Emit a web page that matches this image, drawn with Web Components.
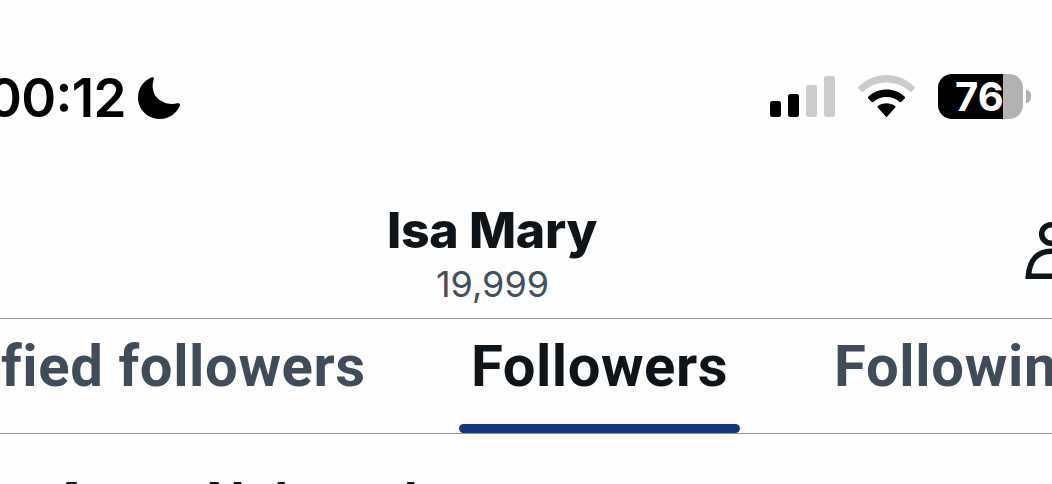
<!DOCTYPE html>
<html lang="en">
<head>
<meta charset="utf-8">
<title>Followers</title>
<style>
  body {
    margin: 0;
    height: 484px;
    overflow: hidden;
    background: #fefefe;
    color: #0f1419;
    font-family: Inter, "Liberation Sans", sans-serif;
  }
</style>
</head>
<body>
<followers-page></followers-page>
<script>
/**
 * Creates a template element from a string of markup.
 *
 * @param {string} html - The markup.
 * @returns {HTMLTemplateElement} The template.
 */
function createTemplate (html) {
  const template = document.createElement('template')
  template.innerHTML = html
  return template
}

const fitTemplate = createTemplate(`
  <style>
    :host {
      display: block;
      white-space: nowrap;
      flex: none;
    }
    span {
      display: inline-block;
    }
  </style>
  <span><slot></slot></span>
`)

customElements.define('fit-text',
  /**
   * A line of text whose tracking is adjusted to fill a given width.
   */
  class extends HTMLElement {
    constructor () {
      super()
      this.attachShadow({ mode: 'open' })
        .appendChild(fitTemplate.content.cloneNode(true))
    }

    connectedCallback () {
      const width = Number(this.getAttribute('width'))
      const span = this.shadowRoot.querySelector('span')
      const natural = span.getBoundingClientRect().width
      span.style.letterSpacing = `${(width - natural) / this.textContent.length}px`
      this.style.width = `${width}px`
    }
  })

const batteryTemplate = createTemplate(`
  <style>
    :host {
      display: flex;
      align-items: center;
      height: 45px;
      gap: 3px;
    }
    .body {
      box-sizing: border-box;
      width: 85px;
      height: 45px;
      padding-left: 17px;
      border-radius: 14px;
      background: linear-gradient(90deg, #000 65px, #b2b2b2 65px);
      color: #fff;
      font-size: 40px;
      font-weight: 700;
      line-height: 46px;
    }
    .nub {
      width: 5px;
      height: 13px;
      border-radius: 0 5px 5px 0;
      background: #b2b2b2;
    }
  </style>
  <div class="body"><fit-text width="49">76</fit-text></div>
  <div class="nub"></div>
`)

customElements.define('battery-level',
  /**
   * Battery with the charge written inside.
   */
  class extends HTMLElement {
    constructor () {
      super()
      this.attachShadow({ mode: 'open' })
        .appendChild(batteryTemplate.content.cloneNode(true))
    }
  })

const statusTemplate = createTemplate(`
  <style>
    :host {
      box-sizing: border-box;
      display: flex;
      justify-content: space-between;
      height: 194px;
      padding: 74px 21px 0 0;
      color: #000;
    }
    .left, .right {
      display: flex;
      align-items: flex-start;
    }
    .left {
      margin-left: -13px;
    }
    .time {
      font-size: 53px;
      font-weight: 600;
      font-feature-settings: "case";
      line-height: 48px;
    }
    .moon {
      margin: 2px 0 0 12px;
    }
    .wifi {
      margin: 0 22px;
    }
    svg {
      display: block;
    }
  </style>
  <div class="left">
    <fit-text class="time" width="139">00:12</fit-text>
    <svg class="moon" width="43" height="43" viewBox="0 0 43 43">
      <path d="M13.2 1.5C15 .6 16.4 1.500 15.700 3.200C13.800 9 14.400 16.500 18.700 21.300C23.200 26.400 31.200 29.500 39.200 27.300C41.500 26.700 42.800 28 42 29.500C38.500 37.300 31.300 43 21.800 43C9.800 43 0 33.800 0 21.500C0 12.400 5.500 4.800 13.200 1.500Z"/>
    </svg>
  </div>
  <div class="right">
    <svg width="66" height="45" viewBox="0 0 66 45">
      <rect x="0" y="27" width="11" height="16" rx="2.500"/>
      <rect x="18" y="20" width="11" height="23" rx="2.500"/>
      <rect x="36" y="11" width="11" height="32" rx="2.500" fill="#ccc"/>
      <rect x="54" y="2" width="11" height="41" rx="2.500" fill="#ccc"/>
    </svg>
    <svg class="wifi" width="58" height="45" viewBox="0 0 58 45">
      <path fill="#ccc" d="M.3 12.900C15.800-3 41.200-3 56.700 12.900Q57.500 13.700 56.700 14.500L53.500 17.800Q52.700 18.600 51.900 17.800C39.200 5.500 17.800 5.500 5.100 17.800Q4.300 18.600 3.500 17.800L.3 14.500Q-.5 13.700 .3 12.900Z"/>
      <path d="M10.300 22.800C20.300 13.100 36.700 13.100 46.700 22.800Q47.500 23.600 46.700 24.400L43.200 27.900Q42.400 28.600 41.600 27.900C34.700 21.500 22.300 21.500 15.400 27.900Q14.600 28.600 13.800 27.900L10.300 24.400Q9.500 23.600 10.300 22.800Z"/>
      <path d="M19.800 32C25 28.200 32 28.200 37.200 32Q38 32.800 37.200 33.600L29.300 42.500Q28.500 43.300 27.700 42.500L19.800 33.600Q19 32.800 19.800 32Z"/>
    </svg>
    <battery-level></battery-level>
  </div>
`)

customElements.define('status-bar',
  /**
   * Clock, signal, wifi and battery of the phone.
   */
  class extends HTMLElement {
    constructor () {
      super()
      this.attachShadow({ mode: 'open' })
        .appendChild(statusTemplate.content.cloneNode(true))
    }
  })

const headerTemplate = createTemplate(`
  <style>
    :host {
      box-sizing: border-box;
      display: grid;
      grid-template-columns: 387px 1fr 28px;
      height: 125px;
      border-bottom: 1px solid #8a939c;
    }
    .title {
      grid-column: 2;
      padding-top: 7px;
    }
    ::slotted([slot=name]) {
      font-size: 50px;
      font-weight: 800;
      line-height: 58px;
    }
    ::slotted([slot=count]) {
      margin: 2px 0 0 49px;
      color: #434f5b;
      font-size: 36px;
      line-height: 46px;
    }
    svg {
      display: block;
      margin-top: 26px;
      overflow: hidden;
    }
  </style>
  <div class="title">
    <slot name="name"></slot>
    <slot name="count"></slot>
  </div>
  <svg width="28" height="62" viewBox="0 0 28 62" fill="none" stroke="#0f1419" stroke-width="5.600">
    <circle cx="27" cy="14" r="9.300"/>
    <path d="M4.400 56.200C5.500 40 14 31.300 27 31.300C40 31.300 48.500 40 49.600 56.200Z"/>
  </svg>
`)

customElements.define('profile-header',
  /**
   * Name and follower count of the profile.
   */
  class extends HTMLElement {
    constructor () {
      super()
      this.attachShadow({ mode: 'open' })
        .appendChild(headerTemplate.content.cloneNode(true))
    }
  })

const tabTemplate = createTemplate(`
  <style>
    :host {
      display: flex;
      flex: none;
      flex-direction: column;
      justify-content: space-between;
      color: #404c59;
      font-family: Roboto, "Liberation Sans", sans-serif;
      font-size: 58px;
      font-weight: 700;
      line-height: 70px;
    }
    :host([selected]) {
      color: #0f1419;
    }
    .label {
      padding: 12px 12px 0;
    }
    .line {
      height: 9px;
      border-radius: 5px;
    }
    :host([selected]) .line {
      background: #15377f;
    }
  </style>
  <div class="label"><slot></slot></div>
  <div class="line"></div>
`)

customElements.define('tab-item',
  /**
   * A tab, underlined when it is selected.
   */
  class extends HTMLElement {
    constructor () {
      super()
      this.attachShadow({ mode: 'open' })
        .appendChild(tabTemplate.content.cloneNode(true))
    }
  })

const barTemplate = createTemplate(`
  <style>
    :host {
      box-sizing: border-box;
      display: flex;
      gap: 82px;
      height: 115px;
      margin-left: -11px;
      border-bottom: 1px solid #8a939c;
      overflow: hidden;
    }
  </style>
  <slot></slot>
`)

customElements.define('tab-bar',
  /**
   * A row of tabs.
   */
  class extends HTMLElement {
    constructor () {
      super()
      this.attachShadow({ mode: 'open' })
        .appendChild(barTemplate.content.cloneNode(true))
    }
  })

const pageTemplate = createTemplate(`
  <style>
    :host {
      display: block;
      height: 484px;
      overflow: hidden;
    }
    .user {
      margin: 36px 0 0 53px;
      font-size: 50px;
      font-weight: 700;
      line-height: 60px;
    }
  </style>
  <status-bar></status-bar>
  <profile-header>
    <fit-text slot="name" width="210">Isa Mary</fit-text>
    <fit-text slot="count" width="113">19,999</fit-text>
  </profile-header>
  <tab-bar>
    <tab-item><fit-text width="364">fied followers</fit-text></tab-item>
    <tab-item selected><fit-text width="257">Followers</fit-text></tab-item>
    <tab-item><fit-text width="257">Following</fit-text></tab-item>
  </tab-bar>
  <fit-text class="user" width="365">Asma Nahreed</fit-text>
`)

customElements.define('followers-page',
  /**
   * The followers screen of a profile.
   */
  class extends HTMLElement {
    constructor () {
      super()
      this.attachShadow({ mode: 'open' })
        .appendChild(pageTemplate.content.cloneNode(true))
    }
  })
</script>
</body>
</html>
